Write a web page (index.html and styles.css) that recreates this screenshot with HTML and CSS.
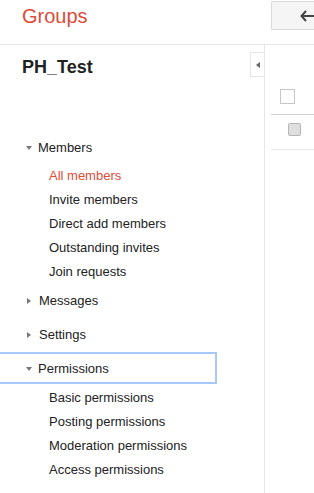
FILE: index.html
```html
<!DOCTYPE html>
<html>
<head>
<meta charset="utf-8">
<link rel="stylesheet" href="styles.css">
</head>
<body>
<header class="topbar">
  <div class="logo">Groups</div>
  <button class="back-btn" aria-label="Back">
    <svg width="15" height="12" viewBox="0 0 15 12"><path d="M6 1 L1.5 6 L6 11 M1.5 6 H15" fill="none" stroke="#444" stroke-width="2"/></svg>
  </button>
</header>
<div class="main">
  <aside class="sidebar">
    <div class="collapse-tab"><span class="tri-left"></span></div>
    <h1 class="group-title">PH_Test</h1>
    <nav class="nav">
      <div class="section open">
        <div class="nav-head"><span class="tri-down"></span>Members</div>
        <ul class="sub">
          <li class="active">All members</li>
          <li>Invite members</li>
          <li>Direct add members</li>
          <li>Outstanding invites</li>
          <li>Join requests</li>
        </ul>
      </div>
      <div class="section">
        <div class="nav-head"><span class="tri-right"></span>Messages</div>
      </div>
      <div class="section">
        <div class="nav-head"><span class="tri-right"></span>Settings</div>
      </div>
      <div class="section">
        <div class="nav-head focused"><span class="tri-down"></span>Permissions</div>
        <ul class="sub sub-perm">
          <li>Basic permissions</li>
          <li>Posting permissions</li>
          <li>Moderation permissions</li>
          <li>Access permissions</li>
        </ul>
      </div>
    </nav>
  </aside>
  <section class="content">
    <div class="row row-head"><span class="cb"></span></div>
    <div class="row row-item"><span class="cb cb-dis"></span></div>
  </section>
</div>
</body>
</html>
```
FILE: styles.css
```css
html, body {
  margin: 0;
  padding: 0;
  overflow: hidden;
  background: #fff;
}
body {
  font-family: "Liberation Sans", Arial, sans-serif;
  font-size: 13px;
  color: #222;
  width: 314px;
  height: 493px;
}
.topbar {
  display: flex;
  height: 44px;
  border-bottom: 1px solid #e5e5e5;
}
.logo {
  flex: 0 0 249px;
  padding: 4px 0 0 22px;
  font-size: 20px;
  line-height: 24px;
  color: #dd4b39;
}
.back-btn {
  flex: 0 0 43px;
  height: 29px;
  margin-top: 1px;
  padding: 0 0 0 28px;
  border: 1px solid #d9d9d9;
  border-right: none;
  border-radius: 2px 0 0 2px;
  background: #f5f5f5;
  display: flex;
  align-items: center;
  overflow: hidden;
}
.back-btn svg { display: block; flex: 0 0 auto; }
.main {
  display: flex;
  height: 448px;
}
.sidebar {
  position: relative;
  flex: 0 0 264px;
  border-right: 1px solid #e5e5e5;
}
.collapse-tab {
  position: absolute;
  right: 0;
  top: 7px;
  width: 13px;
  height: 23px;
  border: 1px solid #e5e5e5;
  border-right: none;
  background: #fff;
  display: flex;
  align-items: center;
  justify-content: center;
}
.tri-left {
  width: 0;
  height: 0;
  border-top: 3px solid transparent;
  border-bottom: 3px solid transparent;
  border-right: 4px solid #666;
}
.group-title {
  margin: 0;
  padding: 11px 0 0 22px;
  font-size: 18px;
  line-height: 22px;
  font-weight: bold;
  color: #222;
}
.nav {
  margin-top: 53px;
}
.section {
  margin-bottom: 2px;
}
.section.open {
  margin-bottom: 0;
}
.nav-head {
  display: flex;
  align-items: center;
  height: 32px;
  padding-left: 26px;
}
.nav-head.focused {
  margin-left: -4px;
  padding-left: 30px;
  width: 191px;
  outline: 2px solid #a8c7fa;
  outline-offset: -2px;
}
.tri-down {
  width: 0;
  height: 0;
  margin: 1px 6px 0 0;
  border-left: 3.5px solid transparent;
  border-right: 3.5px solid transparent;
  border-top: 4px solid #777;
}
.tri-right {
  width: 0;
  height: 0;
  margin: 1px 8px 0 1px;
  border-top: 3.5px solid transparent;
  border-bottom: 3.5px solid transparent;
  border-left: 4px solid #777;
}
.sub {
  list-style: none;
  margin: 0;
  padding: 1px 0 0 49px;
}
.sub-perm {
  padding-top: 2px;
}
.sub li {
  height: 24px;
  line-height: 24px;
}
.sub li.active {
  color: #dd4b39;
}
.content {
  flex: 1;
  padding-left: 6px;
}
.row {
  display: flex;
}
.row-head {
  box-sizing: border-box;
  height: 70px;
  border-bottom: 1px solid #d0d0d0;
  padding: 44px 0 0 9px;
}
.row-item {
  height: 35px;
  box-sizing: border-box;
  border-bottom: 1px solid #e8e8e8;
  padding: 8px 0 0 17px;
}
.cb {
  display: block;
  width: 13px;
  height: 13px;
  border: 1px solid #c6c6c6;
  background: #fff;
}
.cb-dis {
  width: 11px;
  height: 11px;
  border: 1px solid #b5b5b5;
  border-radius: 2px;
  background: #dedede;
}
```
